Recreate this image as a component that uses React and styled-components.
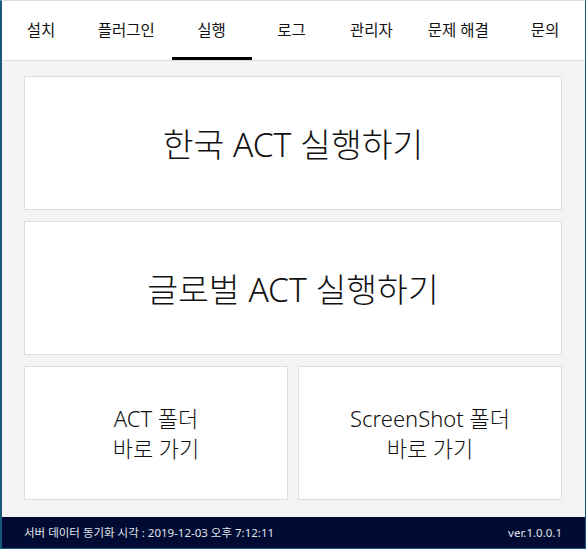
import React from 'react';
import styled, { createGlobalStyle } from 'styled-components';

const GlobalStyle = createGlobalStyle`
  html, body {
    margin: 0;
    padding: 0;
    background: #ffffff;
  }
  body {
    font-family: "Noto Sans", "Noto Sans CJK KR", sans-serif;
    color: #111111;
  }
  * {
    box-sizing: border-box;
  }
`;

const Window = styled.div`
  width: 586px;
  height: 549px;
  display: flex;
  flex-direction: column;
  border-left: 2px solid #17597a;
  border-right: 1px solid #17597a;
  border-bottom: 1px solid #17597a;
  border-top: 1px solid #dcdcdc;
  background: #f3f3f3;
  overflow: hidden;
`;

const TabBar = styled.nav`
  height: 60px;
  display: flex;
  background: #ffffff;
  border-bottom: 1px solid #dcdcdc;
  margin-left: -1px;
`;

const Tab = styled.div`
  width: ${(p) => p.$width}px;
  display: flex;
  align-items: center;
  justify-content: center;
  font-size: 15.5px;
  line-height: 20px;
  padding-top: 1px;
  color: #111111;
  white-space: nowrap;
  border-bottom: 3px solid ${(p) => (p.$active ? '#000000' : 'transparent')};
`;

const Content = styled.main`
  flex: 1;
  display: flex;
  flex-direction: column;
  gap: 11px;
  padding: 15px 23px 17px 22px;
`;

const Row = styled.div`
  display: flex;
  gap: 10px;
  height: 134px;
`;

const Card = styled.button`
  flex: 1;
  height: 134px;
  display: flex;
  flex-direction: column;
  align-items: center;
  justify-content: center;
  background: #ffffff;
  border: 1px solid #dedede;
  padding: 0;
  margin: 0;
  font-family: inherit;
  font-weight: 300;
  color: #111111;
  cursor: pointer;
  font-size: ${(p) => (p.$small ? '22px' : '33.5px')};
  line-height: ${(p) => (p.$small ? '30px' : '40px')};
  padding-top: ${(p) => (p.$small ? '0' : '1px')};
`;

const Footer = styled.footer`
  height: 31px;
  display: flex;
  align-items: center;
  justify-content: space-between;
  padding: 0 23px 0 22px;
  background: #000b33;
  color: #e2e4ea;
  font-size: 11.5px;
  line-height: 16px;
`;

const tabs = [
  { label: '설치', width: 80 },
  { label: '플러그인', width: 91 },
  { label: '실행', width: 80, active: true },
  { label: '로그', width: 80 },
  { label: '관리자', width: 80 },
  { label: '문제 해결', width: 94 },
  { label: '문의', width: 80 },
];

export default function App() {
  return (
    <>
      <GlobalStyle />
      <Window>
        <TabBar>
          {tabs.map((t) => (
            <Tab key={t.label} $width={t.width} $active={t.active}>
              {t.label}
            </Tab>
          ))}
        </TabBar>
        <Content>
          <Card>한국 ACT 실행하기</Card>
          <Card>글로벌 ACT 실행하기</Card>
          <Row>
            <Card $small>
              <span>ACT 폴더</span>
              <span>바로 가기</span>
            </Card>
            <Card $small>
              <span>ScreenShot 폴더</span>
              <span>바로 가기</span>
            </Card>
          </Row>
        </Content>
        <Footer>
          <span>서버 데이터 동기화 시각 : 2019-12-03 오후 7:12:11</span>
          <span>ver.1.0.0.1</span>
        </Footer>
      </Window>
    </>
  );
}
